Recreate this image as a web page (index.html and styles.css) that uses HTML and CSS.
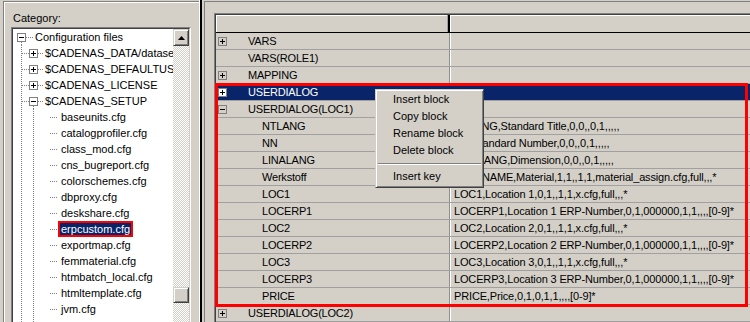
FILE: index.html
```html
<!DOCTYPE html>
<html>
<head>
<meta charset="utf-8">
<title>Configuration</title>
<link rel="stylesheet" href="styles.css">
</head>
<body>
<div class="app">
  <div class="left">
    <div class="group">
      <div class="label">Category:</div>
      <div class="treebox">
        <div class="tbin">
          <div class="tree">
            <div class="node"><span class="gut g0"><span class="box minus"></span></span><span class="txt">Configuration files</span></div>
            <div class="node"><span class="gut g1"><span class="box plus"></span></span><span class="txt">$CADENAS_DATA/datasets</span></div>
            <div class="node"><span class="gut g1"><span class="box plus"></span></span><span class="txt">$CADENAS_DEFAULTUSER</span></div>
            <div class="node"><span class="gut g1"><span class="box plus"></span></span><span class="txt">$CADENAS_LICENSE</span></div>
            <div class="node"><span class="gut g1 open"><span class="box minus"></span></span><span class="txt">$CADENAS_SETUP</span></div>
            <div class="node"><span class="gut g2"></span><span class="txt">baseunits.cfg</span></div>
            <div class="node"><span class="gut g2"></span><span class="txt">catalogprofiler.cfg</span></div>
            <div class="node"><span class="gut g2"></span><span class="txt">class_mod.cfg</span></div>
            <div class="node"><span class="gut g2"></span><span class="txt">cns_bugreport.cfg</span></div>
            <div class="node"><span class="gut g2"></span><span class="txt">colorschemes.cfg</span></div>
            <div class="node"><span class="gut g2"></span><span class="txt">dbproxy.cfg</span></div>
            <div class="node"><span class="gut g2"></span><span class="txt">deskshare.cfg</span></div>
            <div class="node"><span class="gut g2"></span><span class="txt sel">erpcustom.cfg</span></div>
            <div class="node"><span class="gut g2"></span><span class="txt">exportmap.cfg</span></div>
            <div class="node"><span class="gut g2"></span><span class="txt">femmaterial.cfg</span></div>
            <div class="node"><span class="gut g2"></span><span class="txt">htmbatch_local.cfg</span></div>
            <div class="node"><span class="gut g2"></span><span class="txt">htmltemplate.cfg</span></div>
            <div class="node"><span class="gut g2"></span><span class="txt">jvm.cfg</span></div>
            <div class="node"><span class="gut g2"></span><span class="txt"></span></div>
          </div>
          <div class="vscroll">
            <div class="sbtn"><svg width="7" height="4" viewBox="0 0 7 4"><polygon points="3.5,0 7,4 0,4" fill="#000"/></svg></div>
            <div class="track"><div class="thumb"></div></div>
          </div>
        </div>
      </div>
    </div>
  </div>
  <div class="splitter"></div>
  <div class="right">
    <div class="grid">
      <div class="gin">
        <div class="ghead"><div class="hc1"></div><div class="hc2"></div></div>
        <div class="row"><div class="c1"><span class="box plus tb"></span>VARS</div><div class="c2"></div></div>
        <div class="row"><div class="c1 nb">VARS(ROLE1)</div><div class="c2"></div></div>
        <div class="row"><div class="c1"><span class="box plus tb"></span>MAPPING</div><div class="c2"></div></div>
        <div class="row selrow"><div class="c1"><span class="box plus tb"></span>USERDIALOG</div><div class="c2"></div></div>
        <div class="row"><div class="c1"><span class="box minus tb"></span>USERDIALOG(LOC1)</div><div class="c2"></div></div>
        <div class="row"><div class="c1 child">NTLANG</div><div class="c2">NTLANG,Standard Title,0,0,,0,1,,,,,</div></div>
        <div class="row"><div class="c1 child">NN</div><div class="c2">NN,Standard Number,0,0,,0,1,,,,,</div></div>
        <div class="row"><div class="c1 child">LINALANG</div><div class="c2">LINALANG,Dimension,0,0,,0,1,,,,,</div></div>
        <div class="row"><div class="c1 child">Werkstoff</div><div class="c2">MATLNAME,Material,1,1,,1,1,material_assign.cfg,full,,,*</div></div>
        <div class="row"><div class="c1 child">LOC1</div><div class="c2">LOC1,Location 1,0,1,,1,1,x.cfg,full,,,*</div></div>
        <div class="row"><div class="c1 child">LOCERP1</div><div class="c2">LOCERP1,Location 1 ERP-Number,0,1,000000,1,1,,,,[0-9]*</div></div>
        <div class="row"><div class="c1 child">LOC2</div><div class="c2">LOC2,Location 2,0,1,,1,1,x.cfg,full,,,*</div></div>
        <div class="row"><div class="c1 child">LOCERP2</div><div class="c2">LOCERP2,Location 2 ERP-Number,0,1,000000,1,1,,,,[0-9]*</div></div>
        <div class="row"><div class="c1 child">LOC3</div><div class="c2">LOC3,Location 3,0,1,,1,1,x.cfg,full,,,*</div></div>
        <div class="row"><div class="c1 child">LOCERP3</div><div class="c2">LOCERP3,Location 3 ERP-Number,0,1,000000,1,1,,,,[0-9]*</div></div>
        <div class="row"><div class="c1 child">PRICE</div><div class="c2">PRICE,Price,0,1,0,1,1,,,,[0-9]*</div></div>
        <div class="row"><div class="c1"><span class="box plus tb"></span>USERDIALOG(LOC2)</div><div class="c2"></div></div>
      </div>
    </div>
  </div>
  <div class="redbox"></div>
  <div class="menu">
    <div class="mi">Insert block</div>
    <div class="mi">Copy block</div>
    <div class="mi">Rename block</div>
    <div class="mi">Delete block</div>
    <div class="sep"></div>
    <div class="mi">Insert key</div>
  </div>
</div>
</body>
</html>
```

FILE: styles.css
```css
html, body {
  margin: 0;
  padding: 0;
  background: #d4d0c8;
}
.app {
  position: relative;
  display: flex;
  width: 750px;
  height: 322px;
  overflow: hidden;
  background: #d4d0c8;
  font-family: "Liberation Sans", Arial, sans-serif;
  font-size: 11px;
  color: #000;
}

/* ---------- left panel ---------- */
.left {
  width: 199px;
  flex: none;
  box-sizing: border-box;
  padding: 1px 0 0 3px;
}
.group {
  height: 400px;
  border-left: 1px solid #808080;
  border-top: 1px solid #808080;
  box-shadow: inset 1px 1px #fff;
  display: flex;
  flex-direction: column;
}
.label {
  margin-top: 10px;
  padding-left: 9px;
  height: 13px;
  line-height: 13px;
}
.treebox {
  margin: 2px 0 0 7px;
  width: 180px;
  height: 330px;
  box-sizing: border-box;
  border-top: 1px solid #808080;
  border-left: 1px solid #808080;
  border-right: 1px solid #fff;
  border-bottom: 1px solid #fff;
}
.tbin {
  height: 100%;
  box-sizing: border-box;
  border-top: 1px solid #404040;
  border-left: 1px solid #404040;
  border-right: 1px solid #d4d0c8;
  border-bottom: 1px solid #d4d0c8;
  display: flex;
}
.tree {
  flex: 1;
  min-width: 0;
  background: #fff;
  overflow: hidden;
}
.node {
  display: flex;
  height: 16px;
  line-height: 16px;
  white-space: nowrap;
}
.gut {
  flex: none;
  height: 16px;
  box-sizing: border-box;
  padding-top: 4px;
  background-repeat: no-repeat;
}
.g0 {
  width: 22px;
  background-image:
    repeating-linear-gradient(to right, #808080 0 1px, transparent 1px 2px),
    repeating-linear-gradient(to bottom, #808080 0 1px, transparent 1px 2px);
  background-position: 13px 8px, 8px 13px;
  background-size: 8px 1px, 1px 3px;
}
.g0 .box { margin-left: 4px; }
.g1 {
  width: 32px;
  background-image:
    repeating-linear-gradient(to bottom, #808080 0 1px, transparent 1px 2px),
    repeating-linear-gradient(to right, #808080 0 1px, transparent 1px 2px),
    repeating-linear-gradient(to right, #808080 0 1px, transparent 1px 2px);
  background-position: 8px 0, 9px 8px, 25px 8px;
  background-size: 1px 16px, 7px 1px, 6px 1px;
}
.g1.open {
  background-image:
    repeating-linear-gradient(to bottom, #808080 0 1px, transparent 1px 2px),
    repeating-linear-gradient(to right, #808080 0 1px, transparent 1px 2px),
    repeating-linear-gradient(to right, #808080 0 1px, transparent 1px 2px),
    repeating-linear-gradient(to bottom, #808080 0 1px, transparent 1px 2px);
  background-position: 8px 0, 9px 8px, 25px 8px, 20px 13px;
  background-size: 1px 16px, 7px 1px, 6px 1px, 1px 3px;
}
.g1 .box { margin-left: 16px; }
.g2 {
  width: 48px;
  background-image:
    repeating-linear-gradient(to bottom, #808080 0 1px, transparent 1px 2px),
    repeating-linear-gradient(to bottom, #808080 0 1px, transparent 1px 2px),
    repeating-linear-gradient(to right, #808080 0 1px, transparent 1px 2px);
  background-position: 8px 0, 20px 0, 37px 8px;
  background-size: 1px 16px, 1px 16px, 8px 1px;
}
.txt { display: inline-block; }
.txt.sel {
  height: 16px;
  box-sizing: border-box;
  margin-left: -3px;
  padding: 0 1px;
  border: 2px solid #ff0000;
  line-height: 12px;
  background: #0a246a;
  color: #fff;
}

/* expand boxes */
.box {
  display: block;
  width: 9px;
  height: 9px;
  box-sizing: border-box;
  border: 1px solid #808080;
  background-color: #fff;
  background-repeat: no-repeat;
}
.box.minus {
  background-image: linear-gradient(#000, #000);
  background-position: 1px 3px;
  background-size: 5px 1px;
}
.box.plus {
  background-image: linear-gradient(#000, #000), linear-gradient(#000, #000);
  background-position: 1px 3px, 3px 1px;
  background-size: 5px 1px, 1px 5px;
}

/* scrollbar */
.vscroll {
  width: 16px;
  flex: none;
  display: flex;
  flex-direction: column;
}
.sbtn {
  height: 17px;
  flex: none;
  box-sizing: border-box;
  border: 1px solid;
  border-color: #d4d0c8 #404040 #404040 #d4d0c8;
  box-shadow: inset 1px 1px #fff, inset -1px -1px #808080;
  background: #d4d0c8;
  display: flex;
  align-items: center;
  justify-content: center;
}
.track {
  flex: 1;
  background: repeating-conic-gradient(#fff 0 25%, #d4d0c8 0 50%) 0 0 / 2px 2px;
}
.thumb {
  margin-top: 241px;
  height: 16px;
  box-sizing: border-box;
  border: 1px solid;
  border-color: #d4d0c8 #404040 #404040 #d4d0c8;
  box-shadow: inset 1px 1px #fff, inset -1px -1px #808080;
  background: #d4d0c8;
}

/* splitter */
.splitter {
  width: 5px;
  flex: none;
  background: linear-gradient(to right, #fff 0 1px, #000 1px 3px, #d4d0c8 3px);
}

/* ---------- right panel ---------- */
.right {
  flex: 1;
  margin-top: 1px;
  border-left: 1px solid #808080;
  border-top: 1px solid #808080;
  padding: 11px 0 0 9px;
  min-width: 0;
}
.grid {
  border-top: 1px solid #808080;
  border-left: 1px solid #808080;
}
.gin {
  border-top: 1px solid #404040;
  border-left: 1px solid #404040;
}
.ghead {
  display: flex;
  height: 18px;
  box-sizing: border-box;
  border-bottom: 1px solid #000;
}
.hc1 {
  width: 234px;
  flex: none;
  box-sizing: border-box;
  border-right: 2px solid #000;
  box-shadow: inset -1px 0 #a0a0a0, inset 1px 1px #fff;
}
.hc2 {
  flex: 1;
  box-shadow: inset 1px 1px #fff;
}
.row {
  display: flex;
  height: 17px;
  box-sizing: border-box;
  border-bottom: 1px solid #a0a0a0;
  line-height: 16px;
  white-space: nowrap;
}
.c1 {
  width: 234px;
  flex: none;
  box-sizing: border-box;
  border-right: 1px solid #909090;
  display: flex;
  align-items: flex-start;
  letter-spacing: -0.2px;
}
.c1 .tb {
  margin: 4px 21px 0 2px;
  background-color: transparent;
}
.c1.nb { padding-left: 32px; }
.c1.child { padding-left: 46px; }
.c2 {
  flex: 1;
  border-left: 1px solid #fff;
  padding-left: 3px;
  overflow: hidden;
  letter-spacing: -0.15px;
}
.selrow {
  background: #0a246a;
  color: #fff;
}
.selrow .c1 { border-right-color: #0a246a; }
.selrow .c2 { border-left-color: #0a246a; }
.selrow .tb {
  background-color: #fff;
}

/* annotation overlay */
.redbox {
  position: absolute;
  left: 215px;
  top: 83px;
  width: 533px;
  height: 224px;
  box-sizing: border-box;
  border: 3px solid #ff0000;
  pointer-events: none;
}

/* context menu */
.menu {
  position: absolute;
  left: 375px;
  top: 89px;
  width: 109px;
  box-sizing: border-box;
  background: #d4d0c8;
  border: 1px solid;
  border-color: #d4d0c8 #404040 #404040 #d4d0c8;
  box-shadow: inset 1px 1px #fff, inset -1px -1px #808080;
  padding: 1px 1px 2px;
}
.mi {
  height: 17px;
  line-height: 17px;
  padding-left: 16px;
  white-space: nowrap;
}
.sep {
  height: 2px;
  box-sizing: border-box;
  margin: 4px 1px 3px;
  border-top: 1px solid #808080;
  border-bottom: 1px solid #fff;
}
```
